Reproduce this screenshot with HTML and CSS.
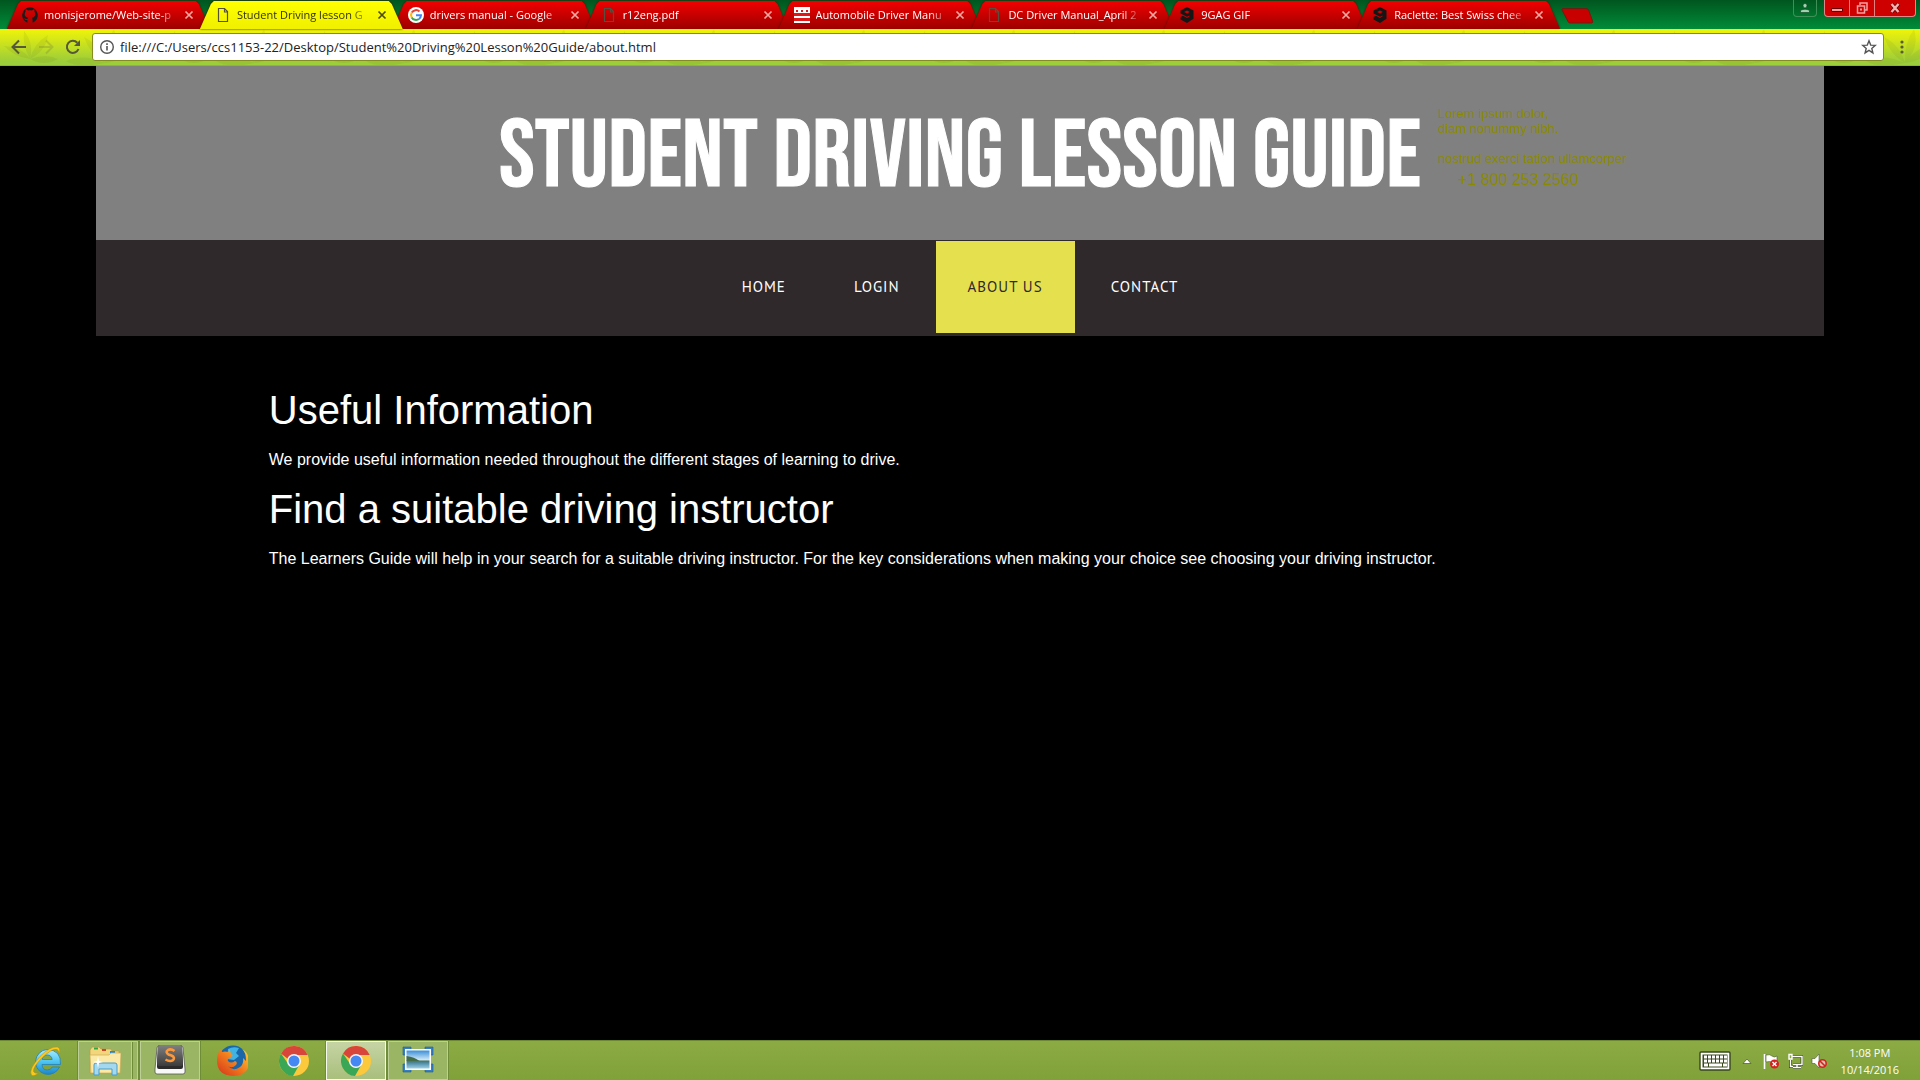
FILE: index.html
```html
<!DOCTYPE html>
<html lang="en">
<head>
<meta charset="utf-8">
<title>Student Driving lesson Guide</title>
<link rel="stylesheet" href="styles.css">
</head>
<body>
<svg class="defs" aria-hidden="true">
  <defs>
    <symbol id="close" viewBox="0 0 10 10"><path d="M1.5 1.5l7 7M8.5 1.5l-7 7" stroke="currentColor" stroke-width="1.7" fill="none"/></symbol>
    <symbol id="page" viewBox="0 0 16 16"><path d="M3.500 1.500h6l3 3v10h-9zM9.500 1.500v3.500h3" stroke="currentColor" fill="none" stroke-width="1.200"/></symbol>
    <symbol id="nine" viewBox="0 0 16 16"><path d="M8 0l6.500 3.500v8.300L8 16l-6.500-3.500V10L4 8.800l4 2.200 2.500-1.400V8.500L8 9.800 1.500 6.500v-3zM8 3.600L5.200 5 8 6.500 10.800 5z" fill="#151515" fill-rule="evenodd"/></symbol>
    <symbol id="chrome" viewBox="0 0 30 30">
      <circle cx="15" cy="15" r="15" fill="#fbc93b"/>
      <path d="M2 7.500A15 15 0 0 1 28.700 9H15a6.500 6.500 0 0 0-6 4z" fill="#d8453b"/>
      <path d="M2 7.500A15 15 0 0 0 14 30l6.500-11.500L15 21.500A6.500 6.500 0 0 1 9.400 18.300z" fill="#3aa757"/>
      <circle cx="15" cy="15" r="7" fill="#f5f5f5"/><circle cx="15" cy="15" r="5.500" fill="#4587f3"/>
    </symbol>
    <pattern id="leaves" width="150" height="40" patternUnits="userSpaceOnUse">
      <g fill="#4c5a00">
        <path d="M30 30Q14 28 4 17Q22 18 30 30Q22 16 24 2Q34 14 30 30Q34 14 48 6Q46 22 30 30Q46 24 58 30Q44 38 30 30" opacity=".09"/>
        <path d="M105 34Q90 26 84 8Q100 16 105 34Q104 14 114 0Q120 18 105 34Q116 18 136 14Q126 32 105 34Q78 40 66 32Q84 24 105 34" opacity=".08"/>
      </g>
    </pattern>
  </defs>
</svg>

<header class="browser">
  <div class="tabstrip">
    <ul class="tabs">
      <li><div class="tab">
        <svg class="fav" viewBox="0 0 16 16"><path d="M8 .3a8 8 0 0 0-2.600 15.500V13c-2.400.4-2.800-1-3.400-1.800 1.200-.2 1.500 1.200 3.500.8 0-.5.3-1 .6-1.200C3.600 10.500 2.600 9 2.700 7c0-1 .4-1.700.9-2.200-.2-.6-.2-1.600.2-2.300.8 0 1.700.5 2.300 1a8 8 0 0 1 3.800 0c.6-.5 1.500-1 2.300-1 .4.700.4 1.700.2 2.300.5.500.9 1.200.9 2.200.1 2-.9 3.500-3.400 3.800.4.400.7.900.7 1.800v3.200A8 8 0 0 0 8 .3z" fill="#1b1b1b"/></svg>
        <a class="tab-title" href="#">monisjerome/Web-site-p</a><button class="tab-close" aria-label="Close tab"><svg viewBox="0 0 10 10"><use href="#close"/></svg></button></div></li>
      <li class="current"><div class="tab">
        <svg class="fav" viewBox="0 0 16 16"><use href="#page"/></svg>
        <a class="tab-title" href="#">Student Driving lesson G</a><button class="tab-close" aria-label="Close tab"><svg viewBox="0 0 10 10"><use href="#close"/></svg></button></div></li>
      <li><div class="tab">
        <svg class="fav" viewBox="0 0 16 16"><circle cx="8" cy="8" r="8" fill="#fff"/><g fill="none" stroke-width="2"><path d="M11.500 4.500A5 5 0 0 0 3.700 5.600" stroke="#ea4335"/><path d="M3.700 5.600a5 5 0 0 0 0 4.800" stroke="#fbbc05"/><path d="M3.700 10.400A5 5 0 0 0 11 12" stroke="#34a853"/><path d="M11 12a5 5 0 0 0 2-3.700H8" stroke="#4285f4"/></g></svg>
        <a class="tab-title" href="#">drivers manual - Google</a><button class="tab-close" aria-label="Close tab"><svg viewBox="0 0 10 10"><use href="#close"/></svg></button></div></li>
      <li><div class="tab">
        <svg class="fav" viewBox="0 0 16 16"><use href="#page"/></svg>
        <a class="tab-title" href="#">r12eng.pdf</a><button class="tab-close" aria-label="Close tab"><svg viewBox="0 0 10 10"><use href="#close"/></svg></button></div></li>
      <li><div class="tab">
        <svg class="fav" viewBox="0 0 16 16"><path fill="#fff" d="M0 0h16v16H0z"/><path fill="#e01818" d="M0 6h16v3H0zM0 11h16v3H0zM2 3h2v2H2zM7 3h2v2H7zM12 3h2v2h-2z"/></svg>
        <a class="tab-title" href="#">Automobile Driver Manu</a><button class="tab-close" aria-label="Close tab"><svg viewBox="0 0 10 10"><use href="#close"/></svg></button></div></li>
      <li><div class="tab">
        <svg class="fav" viewBox="0 0 16 16"><use href="#page"/></svg>
        <a class="tab-title" href="#">DC Driver Manual_April 2</a><button class="tab-close" aria-label="Close tab"><svg viewBox="0 0 10 10"><use href="#close"/></svg></button></div></li>
      <li><div class="tab">
        <svg class="fav" viewBox="0 0 16 16"><use href="#nine"/></svg>
        <a class="tab-title" href="#">9GAG GIF</a><button class="tab-close" aria-label="Close tab"><svg viewBox="0 0 10 10"><use href="#close"/></svg></button></div></li>
      <li><div class="tab">
        <svg class="fav" viewBox="0 0 16 16"><use href="#nine"/></svg>
        <a class="tab-title" href="#">Raclette: Best Swiss chee</a><button class="tab-close" aria-label="Close tab"><svg viewBox="0 0 10 10"><use href="#close"/></svg></button></div></li>
    </ul>
    <button class="new-tab" aria-label="New tab"><svg viewBox="0 0 34 18"><path d="M3 1.500h23q2 0 2.600 1.500l4 11q.6 2-1 2H10q-1.500 0-2-1.500L2 3q-.5-1.500 1-1.500z" fill="#c80000" stroke="#6a2010"/></svg></button>
    <div class="window-buttons">
      <button class="user" aria-label="Profile"><svg viewBox="0 0 12 12"><path d="M6 1.500a2 2 0 0 1 2 2.200Q7.800 6 6 6T4 3.700A2 2 0 0 1 6 1.500zM1.500 10.500V8.700Q2 7.500 6 7.200q4 .3 4.500 1.500v1.800z" fill="#a5d0b0" stroke="#063f1d" stroke-width=".6"/></svg></button>
      <div class="system">
        <button class="min" aria-label="Minimize"><svg viewBox="0 0 12 12"><path d="M.5 6.500h11v3H.5z" fill="#f3a0a0" stroke="#600"/></svg></button>
        <button class="max" aria-label="Restore"><svg viewBox="0 0 12 12"><path d="M4 3V1h7v7H9M1.500 4h7v7h-7z" fill="none" stroke="#f3a0a0" stroke-width="1.500"/><path d="M4 6.500h2v2H4z" fill="#f3a0a0"/></svg></button>
        <button class="quit" aria-label="Close window"><svg viewBox="0 0 12 12"><path d="M2.500 2l7 8M9.500 2l-7 8" stroke="#600" stroke-width="4"/><path d="M2.500 2l7 8M9.500 2l-7 8" stroke="#f6b0b0" stroke-width="2.400"/></svg></button>
      </div>
    </div>
  </div>
  <div class="toolbar">
    <svg class="texture" aria-hidden="true"><rect width="100%" height="100%" fill="url(#leaves)"/></svg>
    <button class="tool" aria-label="Back"><svg viewBox="0 0 16 16"><path d="M15 8H2M8 1.500L1.500 8 8 14.500" fill="none" stroke="#55583a" stroke-width="2"/></svg></button>
    <button class="tool faint" aria-label="Forward"><svg viewBox="0 0 16 16"><path d="M1 8h13M8 1.500L14.500 8 8 14.500" fill="none" stroke="#55583a" stroke-width="2"/></svg></button>
    <button class="tool" aria-label="Reload"><svg viewBox="0 0 16 16"><path d="M13.500 10A6 6 0 1 1 12.300 3.800" fill="none" stroke="#55583a" stroke-width="2"/><path d="M15 1v6H9z" fill="#55583a"/></svg></button>
    <form class="omnibox">
      <svg viewBox="0 0 16 16"><circle cx="8" cy="8" r="6.300" fill="none" stroke="#555" stroke-width="1.400"/><path d="M8 7v4.500M8 4.300v1.600" stroke="#555" stroke-width="1.600"/></svg>
      <input type="text" aria-label="Address" value="file:///C:/Users/ccs1153-22/Desktop/Student%20Driving%20Lesson%20Guide/about.html">
      <button type="button" aria-label="Bookmark"><svg viewBox="0 0 16 16"><path d="M8 1.800l1.700 4.300 4.600.3-3.500 3 1.100 4.500L8 11.400l-3.900 2.500 1.100-4.500-3.500-3 4.600-.3z" fill="none" stroke="#555" stroke-width="1.400"/></svg></button>
    </form>
    <button class="tool more" aria-label="Menu"><svg viewBox="0 0 16 16"><circle cx="8" cy="3" r="1.600"/><circle cx="8" cy="8" r="1.600"/><circle cx="8" cy="13" r="1.600"/></svg></button>
  </div>
</header>

<main class="page">
  <div class="banner">
    <h1>STUDENT DRIVING LESSON GUIDE</h1>
    <address>
      <p>Lorem ipsum dolor,<br>diam nonummy nibh.<br><br>nostrud exerci tation ullamcorper</p>
      <p class="phone">+1 800 253 2560</p>
    </address>
  </div>
  <nav class="menu">
    <a href="#">HOME</a>
    <a href="#">LOGIN</a>
    <a class="active" href="#">ABOUT US</a>
    <a href="#">CONTACT</a>
  </nav>
  <section class="content">
    <h2>Useful Information</h2>
    <p>We provide useful information needed throughout the different stages of learning to drive.</p>
    <h2>Find a suitable driving instructor</h2>
    <p>The Learners Guide will help in your search for a suitable driving instructor. For the key considerations when making your choice see choosing your driving instructor.</p>
  </section>
</main>

<footer class="taskbar">
  <div class="apps">
    <button aria-label="Internet Explorer"><svg viewBox="0 0 32 32"><defs><linearGradient id="ie" x2="0" y2="1"><stop stop-color="#a8ecff"/><stop offset=".5" stop-color="#4cc4f2"/><stop offset="1" stop-color="#1c84c8"/></linearGradient></defs><path d="M17 4.500A12.500 12.500 0 1 0 29.500 22h-7.200q-1.500 3-5 3-5 0-5.300-5.500H30.500Q31.500 5 17 4.500zM12.200 14.500q.8-4.500 5-4.500t5 4.500z" fill="url(#ie)" stroke="#2480b8" stroke-width=".8" fill-rule="evenodd"/><path d="M29 9Q31 3 27.500 2 20 1 10 11.500-2 25 1.500 30q2 2 7-2-4 1-5-1.500-.5-4.500 8-13Q22 3 27 4.500q2 .6 2 4.500z" fill="#fbc81c" stroke="#c08a08" stroke-width=".5"/></svg></button>
    <button class="open stacked" aria-label="File Explorer"><svg viewBox="0 0 32 32"><path d="M1 5l2-3h7l2 2h10l1 2h7v22H1z" fill="#f2d67c" stroke="#b99a45" stroke-width=".7"/><path d="M5 2.500h4v2H5z" fill="#2caa40"/><path d="M13 4h4v2h-4z" fill="#d04428"/><path d="M21 6h5v2h-5z" fill="#2488d8"/><path d="M1 10h19l2-2h10l-1 20H2z" fill="#fbe9a8" stroke="#cdae58" stroke-width=".7"/><path d="M5 30V20q0-2 2-2h19q2 0 2 2v10h-5v-6H10v6z" fill="#a3d8ee" stroke="#4d9cc4"/><path d="M9 11l1 5 4 1-4 1-1 5-1-5-4-1 4-1z" fill="#fff"/></svg></button>
    <button class="open" aria-label="Sublime Text"><svg viewBox="0 0 32 32"><defs><linearGradient id="st" x2="0" y2="1"><stop stop-color="#808080"/><stop offset="1" stop-color="#3c3c3c"/></linearGradient></defs><path d="M1 24L3 3q0-2 2-2h22q2 0 2 2l2 21v3q0 2-2 2H3q-2 0-2-2z" fill="#f8f8f8" stroke="#555" stroke-width=".8"/><path d="M4 2q0-2 2-2h20q2 0 2 2l1 17v3q0 2-2 2H5q-2 0-2-2v-3z" fill="#2c2c2c"/><path d="M4 2q0-2 2-2h20q2 0 2 2l1 16q0 3-2 3H5q-2 0-2-3z" fill="url(#st)"/><path d="M20.500 6Q17 3.500 14 5q-3 2 .5 4.500l3 1q4 2 1.500 4.700-3 2-7.500-.7" fill="none" stroke="#ff9838" stroke-width="2.600"/></svg></button>
    <button aria-label="Firefox"><svg viewBox="0 0 32 32"><defs><linearGradient id="ff" x1="1" x2="0" y2="1"><stop stop-color="#ffd43a"/><stop offset=".5" stop-color="#f17a1c"/><stop offset="1" stop-color="#d33119"/></linearGradient></defs><circle cx="17" cy="15" r="14.500" fill="#1a66a8"/><path d="M12 4Q17 1 23 3l-3 5 3 3-5 4-7-1z" fill="#3fb4e4"/><path d="M3 7q1-3 2-3l1 3q3-1 6 0l2-3q0 5 3 6l-2 3q-4 0-3 3 3 3 7 0 3 1 1 4-4 4-8 1 5 6 12 1 4-3 3-9l3 3q0-9-4-12 6 3 7 11 1 16-16 16Q1 30 1 16q0-6 2-9z" fill="url(#ff)"/></svg></button>
    <button aria-label="Chrome"><svg viewBox="-1 -1 32 32"><use href="#chrome" width="30" height="30"/></svg></button>
    <button class="open front" aria-label="Chrome window"><svg viewBox="-1 -1 32 32"><use href="#chrome" width="30" height="30"/></svg></button>
    <button class="open" aria-label="Photos"><svg viewBox="0 0 32 32"><defs><linearGradient id="sky" x2="0" y2="1"><stop stop-color="#3b8ed8"/><stop offset=".55" stop-color="#d8eefa"/><stop offset=".56" stop-color="#47705a"/><stop offset=".7" stop-color="#4d8ca8"/><stop offset="1" stop-color="#9ed0e4"/></linearGradient></defs><path d="M1 2h8v3H5v5H1zM23 2h8v8h-4V5h-4zM1 19h4v5h4v3H1zM27 19h4v8h-8v-3h4z" fill="#377fc4" stroke="#205a98" stroke-width=".6"/><path d="M3 4h26v21H3z" fill="#fff"/><path d="M4.500 5.500h23v18h-23z" fill="url(#sky)"/><path d="M4.500 11q8 1 13 5h-13z" fill="#426b48"/></svg></button>
  </div>
  <div class="tray">
    <svg class="keyboard" viewBox="0 0 32 20"><rect x="1" y="1" width="30" height="18" rx="1" fill="#fff" stroke="#38481c" stroke-width="1.400"/><path d="M3.500 3.500h25v13h-25z" fill="#38481c"/><path d="M5 4.500h3v3H5zm4 0h3v3H9zm4 0h3v3h-3zm4 0h3v3h-3zm4 0h3v3h-3zm4 0h3v3h-3zM5 8.500h3v3H5zm4 0h3v3H9zm4 0h3v3h-3zm4 0h3v3h-3zm4 0h3v3h-3zm4 0h3v3h-3zM5 12.500h4v3H5zm5 0h13v3H10zm14 0h4v3h-4z" fill="#fff"/></svg>
    <svg class="arrow" viewBox="0 0 16 16"><path d="M4 10.500L8 6l4 4.500z" fill="#fff" stroke="#44591f" stroke-width=".7"/></svg>
    <svg viewBox="0 0 16 16"><path d="M1.500 1v15" stroke="#fff" stroke-width="1.600"/><path d="M3 2q4-1 6 1t5 0v6q-3 1-5 0t-6 0z" fill="#fff" stroke="#4a5c28" stroke-width=".6"/><circle cx="11.500" cy="11" r="4.500" fill="#d82020"/><path d="M9.500 9l4 4m0-4l-4 4" stroke="#fff" stroke-width="1.400"/></svg>
    <svg viewBox="0 0 16 16"><path d="M5 3.500h10v8H6M10 12v2.500M6 14.500h8M3.500 7v6.500H6" fill="none" stroke="#3e4f20" stroke-width="3"/><path d="M5 3.500h10v8H6M10 12v2.500M6 14.500h8M3.500 7v6.500H6M2 1.500h3V6H2z" fill="none" stroke="#fff" stroke-width="1.400"/></svg>
    <svg viewBox="0 0 16 16"><path d="M1 5.500h3L8 1v14l-4-4.500H1z" fill="#fff" stroke="#4a5c28" stroke-width=".6"/><circle cx="11.500" cy="10.500" r="3.700" fill="#d9c4b0" stroke="#d82020" stroke-width="1.600"/><path d="M9 8l5 5" stroke="#d82020" stroke-width="1.600"/></svg>
    <time class="clock" datetime="2016-10-14T13:08">1:08 PM<br>10/14/2016</time>
  </div>
</footer>
</body>
</html>
```
FILE: styles.css
```css
* { box-sizing: border-box; }

body {
  margin: 0;
  min-height: 100vh;
  display: flex;
  flex-direction: column;
  background: #000;
  color: #fff;
  font-family: "Liberation Sans", Arial, sans-serif;
  font-size: 16px;
}

button {
  padding: 0;
  border: 0;
  background: none;
  display: flex;
  align-items: center;
  justify-content: center;
}

svg { display: block; }
.defs { position: absolute; width: 0; height: 0; }

/* Browser frame */
.browser { font-family: "Open Sans", "Noto Sans", sans-serif; }

.tabstrip {
  display: flex;
  height: 29px;
  background: linear-gradient(#00561f, #008c38);
}

.tabs {
  display: flex;
  flex: 0 1 1550px;
  min-width: 0;
  margin: 0;
  padding: 1px 0 0 7px;
  list-style: none;
}

.tabs li {
  flex: 1 1 0;
  min-width: 0;
  margin-right: -10px;
  filter: drop-shadow(0 0 1px #4a1000);
}

.tabs .current { z-index: 1; }

.tab {
  display: flex;
  align-items: center;
  height: 28px;
  padding: 0 16px 0 15px;
  color: #565040;
  background: linear-gradient(#f20000, #9c0000);
  clip-path: polygon(0 100%, 11px 3px, 14px 0, calc(100% - 14px) 0, calc(100% - 11px) 3px, 100% 100%);
}

.current .tab { background: linear-gradient(#ffff00, #f0f000); }

.fav { flex: none; width: 16px; height: 16px; }

.tab-title {
  flex: 1;
  min-width: 0;
  margin: 0 6px;
  overflow: hidden;
  white-space: nowrap;
  font-size: 11px;
  line-height: 20px;
  color: #fff;
  text-decoration: none;
  mask-image: linear-gradient(to left, transparent, #000 20px);
}

.current .tab-title { color: #33330a; }

.tab-close { width: 10px; height: 10px; color: #f2a8a0; }
.tab-close svg { width: 10px; height: 10px; }
.current .tab-close { color: #4c4c10; }

.new-tab { width: 34px; height: 18px; margin: 7px 0 0 10px; }
.new-tab svg { width: 34px; height: 18px; }

.window-buttons {
  display: flex;
  gap: 7px;
  margin: 0 4px 0 auto;
}

.window-buttons svg { width: 12px; height: 12px; }

.user {
  width: 24px;
  height: 17px;
  border: 1px solid #3f9058;
  border-top: 0;
  border-radius: 0 0 4px 4px;
}

.system {
  display: flex;
  height: 17px;
  overflow: hidden;
  background: #cf0000;
  border: 1px solid #d88;
  border-top: 0;
  border-radius: 0 0 4px 4px;
}

.system button { width: 25px; border-right: 1px solid #e08080; }
.system .quit { width: 40px; border-right: 0; }

.toolbar {
  position: relative;
  display: flex;
  align-items: center;
  height: 37px;
  padding: 0 10px 0 11px;
  border-bottom: 1px solid #9a9f8c;
  background: linear-gradient(#f0f408, #9ccd3a 90%);
}

.texture {
  position: absolute;
  inset: 0;
  width: 100%;
  height: 100%;
  pointer-events: none;
}

.tool { flex: none; width: 16px; height: 16px; margin-right: 11px; }
.tool svg { width: 16px; height: 16px; }
.faint { opacity: .2; }

.omnibox {
  position: relative;
  display: flex;
  flex: 1;
  align-items: center;
  height: 28px;
  padding: 0 6px;
  background: #fff;
  border: 1px solid #848c20;
  border-radius: 3px;
}

.omnibox svg { flex: none; width: 16px; height: 16px; }

.omnibox input {
  flex: 1;
  min-width: 0;
  height: 24px;
  padding: 0 0 0 5px;
  border: 0;
  outline: 0;
  background: none;
  color: #222;
  font-family: inherit;
  font-size: 13px;
}

.more { margin: 0 0 0 10px; fill: #5a5a30; }

/* Site */
.page { flex: 1; width: 90%; margin: 0 auto; }

.banner {
  display: grid;
  grid-template-columns: 1fr auto 1fr;
  min-height: 174px;
  background: #808080;
}

.banner h1 {
  grid-column: 2;
  align-self: center;
  margin: 0;
  padding-top: 10px;
  font-family: "Bebas Neue", "Liberation Sans Narrow", "Liberation Sans", sans-serif;
  font-size: 96px;
  font-weight: 400;
  line-height: 96px;
  white-space: nowrap;
  -webkit-text-stroke: 1px #fff;
}

.banner address {
  padding: 40px 0 0 17px;
  color: #8a8a00;
  font-style: normal;
  font-size: 13px;
  line-height: 15px;
  white-space: nowrap;
}

.banner p { margin: 0; }
.banner .phone { padding-left: 20px; font-size: 16px; line-height: 28px; }

.menu {
  display: flex;
  justify-content: center;
  gap: 4px;
  padding: 1px 0 3px;
  background: #2f292b;
}

.menu a {
  padding: 0 32px;
  font-family: "PT Sans", "Noto Sans", sans-serif;
  font-size: 15px;
  line-height: 92px;
  letter-spacing: 1px;
  color: #fff;
  text-decoration: none;
}

.menu .active { background: #e5e14e; color: #2f292b; }

.content { padding: 52px 10%; }

.content h2 {
  margin: 0 0 16px;
  font-size: 40px;
  font-weight: 400;
  line-height: 44px;
}

.content p { margin: 0 0 15px; line-height: 24px; }

/* Taskbar */
.taskbar {
  display: flex;
  justify-content: space-between;
  height: 40px;
  background: linear-gradient(#8cab44, #80a03a);
  border-top: 1px solid #6c8830;
  font-family: "Open Sans", "Noto Sans", sans-serif;
}

.apps { display: flex; gap: 2px; padding-left: 16px; }
.apps button { width: 60px; height: 39px; border: 1px solid transparent; }
.apps svg { width: 32px; height: 32px; }

.apps .open {
  background: #9ab664;
  border-color: #bccf96;
  outline: 1px solid #6f8c38;
}

.apps .front { background: linear-gradient(#c6d4a4, #a9bf7c); border-color: #f6faee; }
.apps .stacked { box-shadow: inset -4px 0 #9ab664, inset -5px 0 #6f8c38, inset -6px 0 #bccf96; padding-right: 6px; }

.tray { display: flex; align-items: center; gap: 8px; padding: 0 21px; }
.tray svg { width: 16px; height: 16px; }
.tray .keyboard { width: 32px; height: 20px; }

.clock {
  padding-left: 6px;
  font-size: 11px;
  line-height: 17px;
  text-align: center;
}
```
